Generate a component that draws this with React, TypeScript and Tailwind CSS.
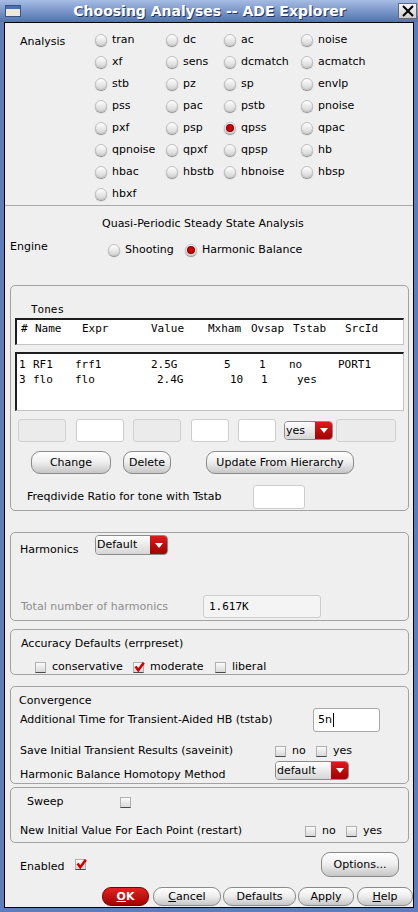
import React from "react";

const mono = "font-['DejaVu_Sans_Mono',monospace]";

const analyses = [
  "tran", "dc", "ac", "noise",
  "xf", "sens", "dcmatch", "acmatch",
  "stb", "pz", "sp", "envlp",
  "pss", "pac", "pstb", "pnoise",
  "pxf", "psp", "qpss", "qpac",
  "qpnoise", "qpxf", "qpsp", "hb",
  "hbac", "hbstb", "hbnoise", "hbsp",
  "hbxf",
];

function Radio({ on = false }: { on?: boolean }) {
  return (
    <span className="flex h-[12px] w-[12px] shrink-0 items-center justify-center rounded-full border border-[#c0c0c0] bg-linear-to-b from-white to-[#d6d6d6] shadow-[0_1px_1px_#8a8a8a]">
      {on && <span className="h-[6px] w-[6px] rounded-full bg-[#d00000] shadow-[0_0_0_1px_#7c0000]" />}
    </span>
  );
}

function Check({ on = false }: { on?: boolean }) {
  return (
    <span className="relative flex h-[11px] w-[11px] shrink-0 items-center justify-center border border-[#b0b0b0] border-b-[#4a4a4a] bg-linear-to-b from-[#fbfbfb] to-[#d8d8d8]">
      {on && (
        <svg width="11" height="10" viewBox="0 0 11 10" className="absolute left-[0px] top-[-1px]">
          <path d="M1.5 4.5 L4.3 8.2 L9.8 0.8" stroke="#d40000" strokeWidth="2.6" fill="none" />
        </svg>
      )}
    </span>
  );
}

function Btn({ children, className = "" }: { children: React.ReactNode; className?: string }) {
  return (
    <div className={`flex items-center justify-center rounded-[9px] border border-[#8a8a8a] bg-linear-to-b from-white via-[#ededed] to-[#c6c6c6] ${className}`}>
      {children}
    </div>
  );
}

function Drop({ label, className = "" }: { label: string; className?: string }) {
  return (
    <div className={`flex overflow-hidden rounded-[4px] border border-[#8a8a8a] ${className}`}>
      <div className="flex flex-1 items-center bg-linear-to-b from-white to-[#d6d6d6] pl-[1px]">{label}</div>
      <div className="flex w-[17px] items-center justify-center bg-linear-to-b from-[#dc1a1a] to-[#a40000]">
        <svg width="8" height="5" viewBox="0 0 8 5">
          <path d="M0 0H8L4 5Z" fill="white" />
        </svg>
      </div>
    </div>
  );
}

export default function App() {
  return (
    <div className="flex h-[912px] w-[418px] flex-col bg-[#5d7eba] font-['DejaVu_Sans',sans-serif] text-[11px] leading-[14px] text-black">
      {/* barra de título */}
      <div className="flex h-[22px] shrink-0 items-center bg-linear-to-b from-[#a6bce3] to-[#5273b0]">
        <div className="ml-[5px] h-[12px] w-[16px] border border-[#3a5384] bg-[#ebe8dc]">
          <div className="h-[3px] bg-[#4b70b2]" />
        </div>
        <div className="flex-1 text-center text-[14px] font-bold text-white [text-shadow:1px_1px_0_#26365a]">
          Choosing Analyses -- ADE Explorer
        </div>
        <div className="mr-[1px] flex h-[16px] w-[19px] items-center justify-center border border-[#6a6a6a] bg-linear-to-b from-[#f6f6f6] to-[#cdcdcd]">
          <svg width="12" height="12" viewBox="0 0 12 12">
            <path d="M1 1L11 11M11 1L1 11" stroke="black" strokeWidth="2" />
          </svg>
        </div>
      </div>

      <div className="mx-[4px] mb-[4px] flex flex-1 flex-col border border-black bg-[#efefef]">
        {/* analysis */}
        <div className="flex h-[183px] shrink-0 border-b border-[#a9a9a9] pt-[6px]">
          <div className="flex h-[22px] w-[90px] items-center pl-[15px] pt-[4px]">Analysis</div>
          <div className="grid auto-rows-[22px] grid-cols-[71px_58px_77px_1fr]">
            {analyses.map((a) => (
              <div key={a} className="flex items-center gap-[5px]">
                <Radio on={a === "qpss"} />
                {a}
              </div>
            ))}
          </div>
        </div>

        <div className="mt-[11px] pl-[97px]">Quasi-Periodic Steady State Analysis</div>
        <div className="mt-[8px] flex h-[22px] items-center">
          <div className="mb-[6px] w-[103px] pl-[5px]">Engine</div>
          <div className="flex w-[77px] items-center gap-[5px]">
            <Radio />
            Shooting
          </div>
          <div className="flex items-center gap-[5px]">
            <Radio on />
            Harmonic Balance
          </div>
        </div>

        {/* tones */}
        <div className="ml-[5px] mr-[4px] mt-[24px] h-[226px] shrink-0 rounded-[5px] border border-[#a2a2a2]">
          <div className={`pl-[20px] pt-[17px] ${mono}`}>Tones</div>
          <div className={`mx-[4px] mt-[1px] h-[27px] border-b border-l-2 border-r border-t-2 border-b-[#c4c4c4] border-l-[#1e1e1e] border-r-[#c4c4c4] border-t-[#1e1e1e] bg-white pl-[4px] pt-[2px] ${mono}`}>
            <div className="flex whitespace-pre">
              <span className="w-[14px]">#</span>
              <span className="w-[47px]">Name</span>
              <span className="w-[69px]">Expr</span>
              <span className="w-[57px]">Value</span>
              <span className="w-[43px]">Mxham</span>
              <span className="w-[42px]">Ovsap</span>
              <span className="w-[52px]">Tstab</span>
              <span>SrcId</span>
            </div>
          </div>
          <div className={`mx-[4px] mt-[7px] h-[59px] border-b border-l-2 border-r border-t-2 border-b-[#c4c4c4] border-l-[#1e1e1e] border-r-[#c4c4c4] border-t-[#1e1e1e] bg-white pl-[2px] pt-[3px] leading-[15px] ${mono}`}>
            <div className="flex whitespace-pre">
              <span className="w-[14px]">1</span>
              <span className="w-[42px]">RF1</span>
              <span className="w-[76px]">frf1</span>
              <span className="w-[73px]">2.5G</span>
              <span className="w-[35px]">5</span>
              <span className="w-[30px]">1</span>
              <span className="w-[49px]">no</span>
              <span>PORT1</span>
            </div>
            <div className="flex whitespace-pre">
              <span className="w-[14px]">3</span>
              <span className="w-[42px]">flo</span>
              <span className="w-[82px]">flo</span>
              <span className="w-[73px]">2.4G</span>
              <span className="w-[31px]">10</span>
              <span className="w-[36px]">1</span>
              <span>yes</span>
            </div>
          </div>
          <div className="ml-[7px] mt-[8px] flex h-[23px] items-start">
            <div className="h-[23px] w-[48px] rounded-[3px] border border-[#d0d0d0] bg-[#ebebeb]" />
            <div className="ml-[10px] h-[23px] w-[48px] rounded-[3px] border border-[#cdcdcd] bg-white" />
            <div className="ml-[9px] h-[23px] w-[48px] rounded-[3px] border border-[#d0d0d0] bg-[#ebebeb]" />
            <div className="ml-[10px] h-[23px] w-[38px] rounded-[3px] border border-[#cdcdcd] bg-white" />
            <div className="ml-[9px] h-[23px] w-[38px] rounded-[3px] border border-[#cdcdcd] bg-white" />
            <Drop label="yes" className="ml-[8px] mt-[2px] h-[19px] w-[49px]" />
            <div className="ml-[3px] h-[23px] w-[60px] rounded-[3px] border border-[#d0d0d0] bg-[#ebebeb]" />
          </div>
          <div className="ml-[20px] mt-[9px] flex h-[23px]">
            <Btn className="w-[80px]">Change</Btn>
            <Btn className="ml-[12px] w-[48px]">Delete</Btn>
            <Btn className="ml-[35px] w-[148px]">Update From Hierarchy</Btn>
          </div>
          <div className="mt-[11px] flex h-[24px] items-center pl-[16px]">
            <div className="w-[226px]">Freqdivide Ratio for tone with Tstab</div>
            <div className="h-[24px] w-[52px] rounded-[3px] border border-[#cdcdcd] bg-white" />
          </div>
        </div>

        {/* harmonics */}
        <div className="ml-[5px] mr-[4px] mt-[21px] h-[89px] shrink-0 rounded-[5px] border border-[#a2a2a2]">
          <div className="flex pt-[2px]">
            <div className="mt-[8px] w-[84px] pl-[9px]">Harmonics</div>
            <Drop label="Default" className="h-[20px] w-[73px]" />
          </div>
          <div className="mt-[38px] flex h-[23px] items-center">
            <div className="w-[192px] pl-[10px] text-[#8d8d8d]">Total number of harmonics</div>
            <div className={`flex h-[23px] w-[118px] items-center rounded-[3px] border border-[#cdcdcd] bg-[#f4f4f4] pl-[5px] ${mono}`}>
              1.617K
            </div>
          </div>
        </div>

        {/* accuracy */}
        <div className="ml-[5px] mr-[4px] mt-[8px] h-[46px] shrink-0 rounded-[5px] border border-[#a2a2a2]">
          <div className="pl-[10px] pt-[7px]">Accuracy Defaults (errpreset)</div>
          <div className="mt-[9px] flex h-[14px] items-center pl-[24px]">
            <div className="flex w-[98px] items-center gap-[6px]">
              <Check />
              conservative
            </div>
            <div className="flex w-[82px] items-center gap-[6px]">
              <Check on />
              moderate
            </div>
            <div className="flex items-center gap-[6px]">
              <Check />
              liberal
            </div>
          </div>
        </div>

        {/* convergence */}
        <div className="ml-[5px] mr-[4px] mt-[11px] h-[98px] shrink-0 rounded-[5px] border border-[#a2a2a2]">
          <div className="pl-[8px] pt-[7px]">Convergence</div>
          <div className="flex h-[24px] items-center">
            <div className="w-[302px] pl-[9px]">Additional Time for Transient-Aided HB (tstab)</div>
            <div className="flex h-[24px] w-[67px] items-center rounded-[3px] border border-[#a8a8a8] bg-white pl-[4px]">
              5n<span className="ml-[1px] h-[14px] w-[1px] bg-black" />
            </div>
          </div>
          <div className="mt-[12px] flex h-[14px] items-center">
            <div className="w-[264px] pl-[9px]">Save Initial Transient Results (saveinit)</div>
            <div className="flex w-[41px] items-center gap-[6px]">
              <Check />
              no
            </div>
            <div className="flex items-center gap-[6px]">
              <Check />
              yes
            </div>
          </div>
          <div className="mt-[3px] flex h-[20px] items-start">
            <div className="mt-[7px] w-[264px] pl-[9px]">Harmonic Balance Homotopy Method</div>
            <Drop label="default" className="h-[19px] w-[74px]" />
          </div>
        </div>

        {/* sweep */}
        <div className="ml-[5px] mr-[4px] mt-[3px] h-[56px] shrink-0 rounded-[5px] border border-[#a2a2a2]">
          <div className="mt-[7px] flex h-[14px] items-center">
            <div className="w-[109px] pl-[16px]">Sweep</div>
            <Check />
          </div>
          <div className="mt-[15px] flex h-[14px] items-center">
            <div className="w-[294px] pl-[9px]">New Initial Value For Each Point (restart)</div>
            <div className="flex w-[41px] items-center gap-[6px]">
              <Check />
              no
            </div>
            <div className="flex items-center gap-[6px]">
              <Check />
              yes
            </div>
          </div>
        </div>

        <div className="mt-[9px] flex h-[25px] items-center">
          <div className="mt-[4px] w-[70px] pl-[15px]">Enabled</div>
          <Check on />
          <div className="flex-1" />
          <Btn className="mr-[14px] h-[25px] w-[78px]">Options...</Btn>
        </div>

        <div className="mt-[10px] flex h-[19px] justify-end">
          <div className="flex w-[47px] items-center justify-center rounded-[9px] border border-[#7a0000] bg-linear-to-b from-[#e42222] to-[#a20000] font-bold text-white">
            <span className="underline">O</span>K
          </div>
          <Btn className="ml-[4px] w-[68px]">
            <span className="underline">C</span>ancel
          </Btn>
          <Btn className="ml-[2px] w-[73px]">Defaults</Btn>
          <Btn className="ml-[2px] w-[56px]">Apply</Btn>
          <Btn className="ml-[3px] w-[56px]">
            <span className="underline">H</span>elp
          </Btn>
        </div>
      </div>
    </div>
  );
}
